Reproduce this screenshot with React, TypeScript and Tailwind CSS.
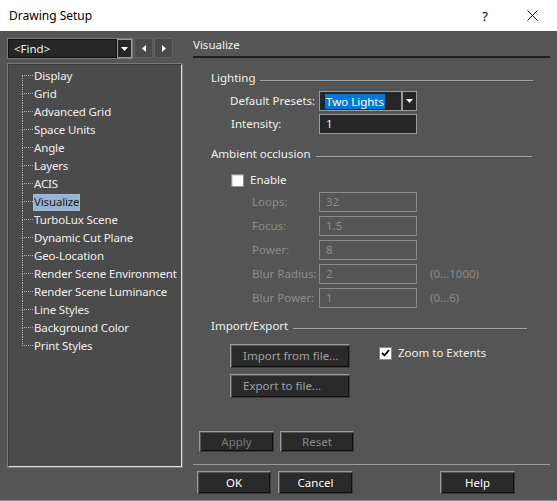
import React from "react";

const F = { fontFamily: '"Noto Sans", "Segoe UI", sans-serif' };

const treeItems = [
  "Display", "Grid", "Advanced Grid", "Space Units", "Angle", "Layers", "ACIS", "Visualize",
  "TurboLux Scene", "Dynamic Cut Plane", "Geo-Location", "Render Scene Environment",
  "Render Scene Luminance", "Line Styles", "Background Color", "Print Styles",
];

function Tri({ dir }: { dir: "down" | "left" | "right" }) {
  if (dir === "down")
    return (
      <svg width="7" height="4" viewBox="0 0 7 4"><path d="M0 0h7L3.5 4z" fill="#fff" /></svg>
    );
  if (dir === "left")
    return (
      <svg width="4" height="7" viewBox="0 0 4 7"><path d="M4 0v7L0 3.5z" fill="#fff" /></svg>
    );
  return (
    <svg width="4" height="7" viewBox="0 0 4 7"><path d="M0 0v7l4-3.5z" fill="#fff" /></svg>
  );
}

function GroupLabel({ text, lineEnd = 17 }: { text: string; lineEnd?: number }) {
  return (
    <div className="flex items-center h-[16px] pl-[18px]" style={{ paddingRight: lineEnd }}>
      <span className="text-[#f0f0f0] whitespace-nowrap">{text}</span>
      <div className="flex-1 ml-[5px] mt-[6px] h-[2px] border-t border-[#a8a8a8] border-b border-b-[#4a4a4a]" />
    </div>
  );
}

function DisabledRow({ label, value, range, mt }: { label: string; value: string; range?: string; mt: string }) {
  return (
    <div className={`flex items-center h-[20px] ${mt}`}>
      <span className="w-[126px] pl-[59px] text-[#8c8c8c] whitespace-nowrap">{label}</span>
      <div className="w-[98px] h-[20px] border border-[#8c8c8c] flex items-center pl-[6px] text-[#8c8c8c]">
        {value}
      </div>
      {range && <span className="ml-[13px] text-[#8c8c8c]">{range}</span>}
    </div>
  );
}

function Btn({ children, w, ml, h = "h-[23px]", textColor = "text-white", align = "justify-center" }: { children: React.ReactNode; w: string; ml?: string; h?: string; textColor?: string; align?: string }) {
  return (
    <div
      className={`${w} ${h} ${ml ?? ""} bg-[#2a2a2a] border border-t-[#9a9a9a] border-l-[#9a9a9a] border-r-[#3a3a3a] border-b-[#3a3a3a] shadow-[inset_1px_1px_0_#555,inset_-1px_-1px_0_#111] flex items-center ${align} ${textColor}`}
    >
      {children}
    </div>
  );
}

export default function App() {
  return (
    <div className="w-[557px] h-[501px] bg-[#555555] flex flex-col text-[11.5px] leading-[16px] border-b border-[#8a8a8a]" style={F}>
      {/* title bar */}
      <div className="h-[31px] bg-white flex items-center shrink-0">
        <span className="ml-[9px] text-black text-[12px]">Drawing Setup</span>
        <span className="ml-auto mr-[39px] text-black text-[13px]">?</span>
        <svg className="mr-[19px]" width="11" height="11" viewBox="0 0 11 11">
          <path d="M0.5 0.5l10 10M10.5 0.5l-10 10" stroke="#000" strokeWidth="1" />
        </svg>
      </div>

      <div className="flex flex-1">
        {/* left column */}
        <div className="w-[193px] pl-[7px] pt-[7px] flex flex-col">
          <div className="flex h-[21px]">
            <div className="w-[126px] h-[21px] bg-[#262626] border border-[#7a7a7a] flex">
              <div className="flex-1 border border-[#111] flex items-center pl-[5px] text-[#f0f0f0]">&lt;Find&gt;</div>
              <div className="w-[15px] border border-[#9a9a9a] flex items-center justify-center">
                <Tri dir="down" />
              </div>
            </div>
            <div className="ml-[1px] w-[19px] h-[20px] bg-[#4a4a4a] border border-[#606060] flex items-center justify-center">
              <Tri dir="left" />
            </div>
            <div className="ml-[1px] w-[19px] h-[20px] bg-[#4a4a4a] border border-[#606060] flex items-center justify-center">
              <Tri dir="right" />
            </div>
          </div>
          <div className="mt-[4px] w-[176px] h-[405px] border border-[#7a7a7a]">
            <div className="w-full h-full border border-t-[#3c3c3c] border-l-[#3c3c3c] border-r-[#e0e0e0] border-b-[#e0e0e0] bg-[#4b4b4b] pt-[2px] overflow-hidden">
              {treeItems.map((t, i) => {
                const sel = t === "Visualize";
                return (
                  <div key={t} className="flex h-[18px]">
                    <div className="ml-[13px] w-[11px] shrink-0 flex flex-col">
                      <div className={`h-[9px] border-b border-dotted border-b-[#b0b0b0] ${i > 0 ? "border-l border-dotted border-l-[#b0b0b0]" : ""}`} />
                      <div className={`h-[9px] ${i < treeItems.length - 1 ? "border-l border-dotted border-l-[#b0b0b0]" : ""}`} />
                    </div>
                    <div className="flex items-center">
                      <span
                        className={`px-[1px] h-[17px] flex items-center whitespace-nowrap tracking-[-0.15px] ${sel ? "bg-[#99b4d1] text-[#1a1a1a] outline-1 outline-dotted outline-[#e0c060] -outline-offset-1" : "text-[#f0f0f0]"}`}
                      >
                        {t}
                      </span>
                    </div>
                  </div>
                );
              })}
            </div>
          </div>
        </div>

        {/* right column */}
        <div className="w-[357px] flex flex-col pt-[6px]">
          <div className="h-[16px] text-[#f0f0f0]">Visualize</div>
          <div className="mt-[3px] h-[2px] bg-[#1e1e1e]" />

          <div className="mt-[12px]"><GroupLabel text="Lighting" /></div>

          <div className="mt-[5px] flex items-center h-[20px]">
            <span className="w-[126px] pl-[37px] text-[#f0f0f0] whitespace-nowrap">Default Presets:</span>
            <div className="w-[83px] h-[20px] bg-[#262626] border border-[#9a9a9a] flex items-center pl-[5px]">
              <span className="bg-[#0078d7] text-white px-[1px] leading-[15px]">Two Lights</span>
            </div>
            <div className="w-[15px] h-[20px] bg-[#262626] border border-[#9a9a9a] flex items-center justify-center">
              <Tri dir="down" />
            </div>
          </div>

          <div className="mt-[3px] flex items-center h-[20px]">
            <span className="w-[126px] pl-[38px] text-[#f0f0f0]">Intensity:</span>
            <div className="w-[98px] h-[20px] bg-[#262626] border border-[#9a9a9a] flex items-center pl-[6px] text-[#f0f0f0]">1</div>
          </div>

          <div className="mt-[12px]"><GroupLabel text="Ambient occlusion" lineEnd={18} /></div>

          <div className="mt-[10px] flex items-center h-[16px] pl-[38px]">
            <div className="w-[13px] h-[13px] bg-white border border-[#8a8a8a] shadow-[inset_1px_1px_0_#d8d8d8]" />
            <span className="ml-[6px] text-[#f0f0f0]">Enable</span>
          </div>

          <DisabledRow label="Loops:" value="32" mt="mt-[4px]" />
          <DisabledRow label="Focus:" value="1.5" mt="mt-[4px]" />
          <DisabledRow label="Power:" value="8" mt="mt-[4px]" />
          <DisabledRow label="Blur Radius:" value="2" range="(0...1000)" mt="mt-[4px]" />
          <DisabledRow label="Blur Power:" value="1" range="(0...6)" mt="mt-[4px]" />

          <div className="mt-[10px]"><GroupLabel text="Import/Export" lineEnd={23} /></div>

          <div className="mt-[10px] flex items-start">
            <div className="ml-[37px] flex flex-col">
              <Btn w="w-[120px]" h="h-[24px]" textColor="text-[#a0a0a0]" align="justify-start pl-[12px]">Import from file...</Btn>
              <div className="mt-[6px]">
                <Btn w="w-[120px]" h="h-[24px]" textColor="text-[#a0a0a0]" align="justify-start pl-[12px]">Export to file...</Btn>
              </div>
            </div>
            <div className="ml-[29px] mt-[1px] flex items-center h-[16px]">
              <div className="w-[13px] h-[13px] bg-white border border-[#8a8a8a] flex items-center justify-center">
                <svg width="9" height="8" viewBox="0 0 9 8"><path d="M1 4l2.5 2.5L8 1" stroke="#000" strokeWidth="1.8" fill="none" /></svg>
              </div>
              <span className="ml-[6px] text-[#f0f0f0]">Zoom to Extents</span>
            </div>
          </div>

          <div className="mt-[33px] flex">
            <Btn w="w-[75px]" h="h-[21px]" ml="ml-[6px]" textColor="text-[#7c7c7c]">Apply</Btn>
            <Btn w="w-[74px]" h="h-[21px]" ml="ml-[6px]" textColor="text-[#8c8c8c]">Reset</Btn>
          </div>

          <div className="mt-[12px] h-[1px] bg-[#9a9a9a]" />

          <div className="mt-[6px] flex">
            <Btn w="w-[74px]" ml="ml-[4px]">OK</Btn>
            <Btn w="w-[75px]" ml="ml-[7px]">Cancel</Btn>
            <Btn w="w-[75px]" ml="ml-[87px]">Help</Btn>
          </div>
        </div>
      </div>
    </div>
  );
}
